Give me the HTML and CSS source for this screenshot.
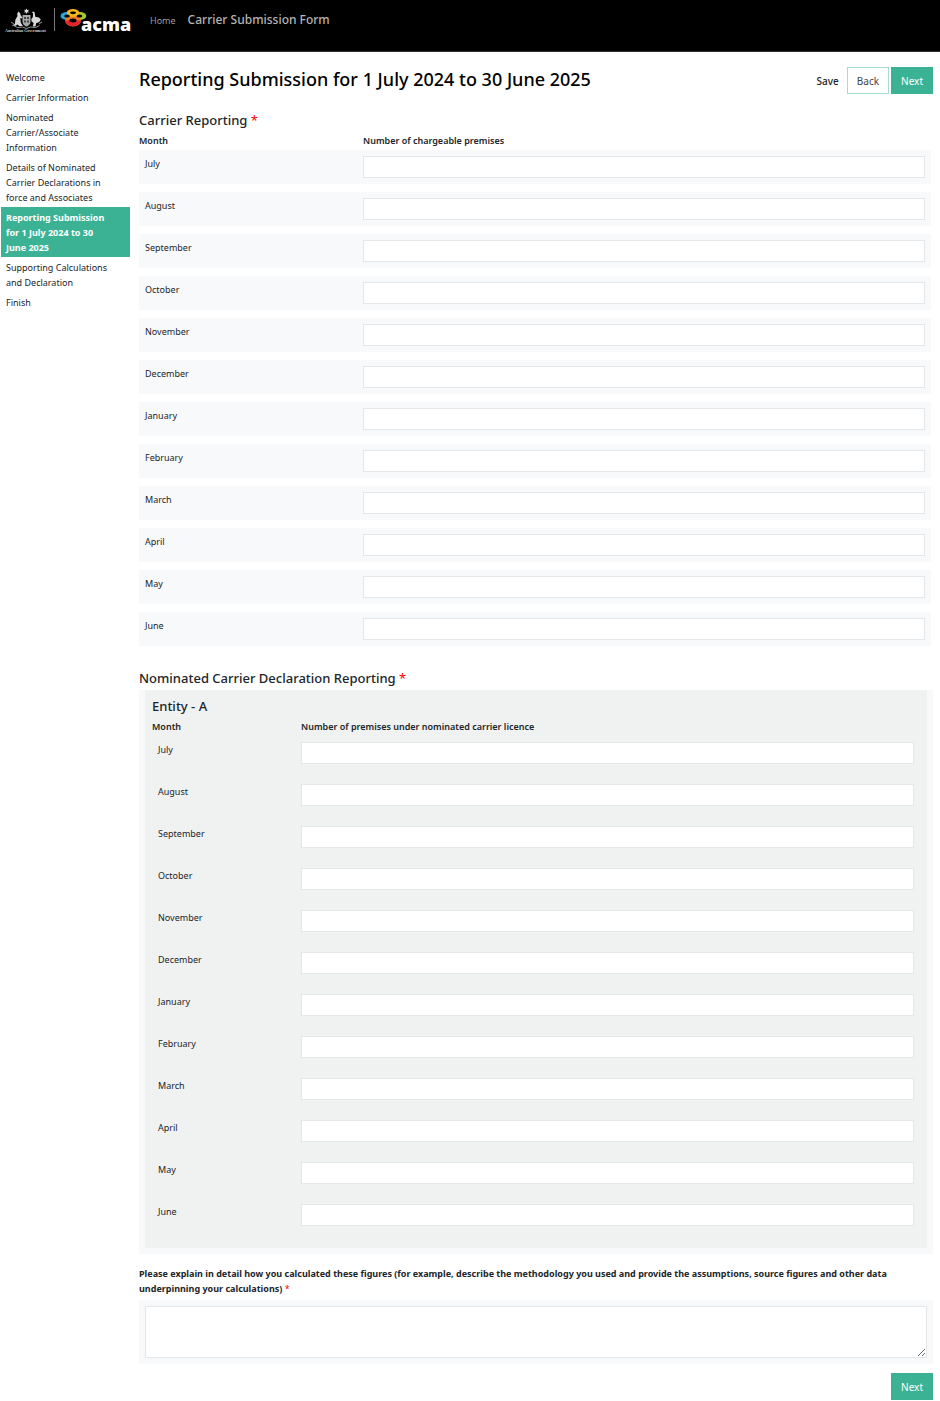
FILE: index.html
```html
<!DOCTYPE html>
<html lang="en">
<head>
  <meta charset="UTF-8" />
  <meta name="viewport" content="width=device-width, initial-scale=1" />
  <title>Carrier Submission Form</title>
  <link rel="stylesheet" href="styles.css">
</head>
<body>
  <header class="topbar">
    <svg class="logo" width="128" height="30" viewBox="0 0 128 30" role="img" aria-label="Australian Government, acma">
      <!-- Coat of arms -->
      <g fill="#d8d8d8">
        <path d="M21.500 .5l.8 1.600 1.700-.3-1 1.400 1 1.400-1.700-.3-.8 1.600-.8-1.600-1.700.3 1-1.400-1-1.400 1.700.3z" />
        <path d="M17.500 7h8v6.500c0 2.500-1.800 4.200-4 5.300-2.200-1.100-4-2.800-4-5.300z" fill="#a9a9a9" />
        <path d="M13.500 3.500l1.500 1.500.8 2.500 1.500 2-.4 1-1.700-.8.6 5 2 3.300h-3.500l-1.800-1.500-2 1.200-4-.2 3.300-1.500.7-4.500 2-3.500-.3-2.500z" />
        <path d="M28.500 3.500l-1.700 1 1.300.7-.3 4-1.500 1.800.3 2.500 2 1.500-.8 3.500h2.700l.6-3.200 3.200-1.300 1.500-2.500-2-2-3.500-.7-.7-4.500z" />
      </g>
      <path d="M19 9h2v2h-2zM22 9h2v2h-2zM19 12.500h2v2h-2zM22 12.500h2v2h-2z" fill="#444" />
      <path d="M8.500 17.500l4 2 5-.5 4 1.500 4-1.500 5 .5 4-2M6 14l3 2M37 14l-3 2" fill="none" stroke="#999" stroke-width="1" />
      <text class="logo-gov" x="0" y="24">Australian Government</text>
      <path d="M49.500 0v23" stroke="#777" stroke-width="1" />
      <!-- Petals, each with a dark centre -->
      <ellipse cx="61.500" cy="8" rx="6" ry="3.900" fill="#2aa5d8" />
      <ellipse cx="75" cy="8" rx="6.300" ry="3.900" fill="#a4c92e" />
      <ellipse cx="68" cy="12.500" rx="7.800" ry="6" fill="#f47b20" />
      <path d="M60.200 12.500c0 3.500 3.500 5.500 7.800 5.500s7.800-2 7.800-5.500z" fill="#e5252b" />
      <ellipse cx="68" cy="5" rx="6.300" ry="4" fill="#f8b81a" />
      <g fill="#000">
        <ellipse cx="62" cy="8" rx="2.800" ry="1.500" />
        <ellipse cx="74.500" cy="8" rx="2.800" ry="1.500" />
        <ellipse cx="68" cy="4.800" rx="3" ry="1.400" />
        <ellipse cx="68" cy="12.500" rx="3.600" ry="1.900" />
      </g>
      <text class="logo-acma" x="76" y="23">acma</text>
    </svg>
    <nav class="topnav">
      <a href="#" class="home">Home</a>
      <a href="#" class="form-name">Carrier Submission Form</a>
    </nav>
  </header>

  <div class="layout">
    <nav class="steps">
      <a href="#">Welcome</a>
      <a href="#">Carrier Information</a>
      <a href="#">Nominated Carrier/Associate Information</a>
      <a href="#">Details of Nominated Carrier Declarations in force and Associates</a>
      <a href="#" class="active">Reporting Submission for 1 July 2024 to 30 June 2025</a>
      <a href="#">Supporting Calculations and Declaration</a>
      <a href="#">Finish</a>
    </nav>

    <main>
      <div class="title-row">
        <h1>Reporting Submission for 1 July 2024 to 30 June 2025</h1>
        <div class="actions">
          <button type="button" class="btn link">Save</button>
          <button type="button" class="btn outline">Back</button>
          <button type="button" class="btn">Next</button>
        </div>
      </div>

      <!-- Carrier Reporting -->
      <section class="carrier">
        <h2>Carrier Reporting <span class="required">*</span></h2>
        <div class="head"><span>Month</span><span>Number of chargeable premises</span></div>
        <div class="rows">
          <div class="row"><label for="c-jul">July</label><input type="text" id="c-jul"></div>
          <div class="row"><label for="c-aug">August</label><input type="text" id="c-aug"></div>
          <div class="row"><label for="c-sep">September</label><input type="text" id="c-sep"></div>
          <div class="row"><label for="c-oct">October</label><input type="text" id="c-oct"></div>
          <div class="row"><label for="c-nov">November</label><input type="text" id="c-nov"></div>
          <div class="row"><label for="c-dec">December</label><input type="text" id="c-dec"></div>
          <div class="row"><label for="c-jan">January</label><input type="text" id="c-jan"></div>
          <div class="row"><label for="c-feb">February</label><input type="text" id="c-feb"></div>
          <div class="row"><label for="c-mar">March</label><input type="text" id="c-mar"></div>
          <div class="row"><label for="c-apr">April</label><input type="text" id="c-apr"></div>
          <div class="row"><label for="c-may">May</label><input type="text" id="c-may"></div>
          <div class="row"><label for="c-jun">June</label><input type="text" id="c-jun"></div>
        </div>
      </section>

      <!-- Nominated Carrier Declaration Reporting -->
      <section class="nominated">
        <h2>Nominated Carrier Declaration Reporting <span class="required">*</span></h2>
        <div class="panel">
          <div class="entity">
            <h3>Entity - A</h3>
            <div class="head"><span>Month</span><span>Number of premises under nominated carrier licence</span></div>
            <div class="rows">
              <div class="row"><label for="n-jul">July</label><input type="text" id="n-jul"></div>
              <div class="row"><label for="n-aug">August</label><input type="text" id="n-aug"></div>
              <div class="row"><label for="n-sep">September</label><input type="text" id="n-sep"></div>
              <div class="row"><label for="n-oct">October</label><input type="text" id="n-oct"></div>
              <div class="row"><label for="n-nov">November</label><input type="text" id="n-nov"></div>
              <div class="row"><label for="n-dec">December</label><input type="text" id="n-dec"></div>
              <div class="row"><label for="n-jan">January</label><input type="text" id="n-jan"></div>
              <div class="row"><label for="n-feb">February</label><input type="text" id="n-feb"></div>
              <div class="row"><label for="n-mar">March</label><input type="text" id="n-mar"></div>
              <div class="row"><label for="n-apr">April</label><input type="text" id="n-apr"></div>
              <div class="row"><label for="n-may">May</label><input type="text" id="n-may"></div>
              <div class="row"><label for="n-jun">June</label><input type="text" id="n-jun"></div>
            </div>
          </div>
        </div>
      </section>

      <section class="explain">
        <label for="method">Please explain in detail how you calculated these figures (for example, describe the methodology you used and provide the assumptions, source figures and other data underpinning your calculations) <span class="required">*</span></label>
        <div class="answer"><textarea id="method"></textarea></div>
      </section>

      <div class="footer-actions">
        <button type="button" class="btn">Next</button>
      </div>
    </main>
  </div>
</body>
</html>
```

FILE: styles.css
```css
* {
  box-sizing: border-box;
}

body {
  margin: 0;
  background-color: #fff;
  color: #212529;
  font-family: 'Noto Sans', 'Open Sans', sans-serif;
  font-size: 9px;
  line-height: 15px;
}

a {
  color: inherit;
  text-decoration: none;
}

h1, h2, h3 {
  margin: 0;
  font-weight: 500;
}

/* Top bar */
.topbar {
  display: flex;
  align-items: flex-start;
  gap: 17px;
  height: 52px;
  padding: 8px 5px;
  background-color: #000;
  border-bottom: 1px solid #333;
}

.logo-gov {
  fill: #ccc;
  font-family: 'Liberation Serif', serif;
  font-size: 4px;
  font-weight: bold;
}

.logo-acma {
  fill: #fff;
  font-family: 'Open Sans', sans-serif;
  font-size: 18px;
  font-weight: 800;
}

.topnav {
  display: flex;
  align-items: baseline;
  gap: 12px;
  line-height: 24px;
  color: #9d9d9d;
}

.form-name {
  font-size: 12px;
  font-weight: 500;
  color: #b5b5b5;
}

/* Page layout */
.layout {
  display: grid;
  grid-template-columns: 129px 1fr;
  gap: 9px;
  padding: 15px 7px 1px 1px;
}

.steps a {
  display: block;
  padding: 3px 15px 2px 5px;
}

.steps .active {
  background-color: #3cb295;
  color: #fff;
  font-weight: bold;
}

/* Title and buttons */
.title-row {
  display: flex;
  justify-content: space-between;
  align-items: flex-start;
  margin-bottom: 14px;
}

h1 {
  font-size: 18px;
  line-height: 24px;
  color: #000;
}

.actions {
  display: flex;
  gap: 2px;
}

.btn {
  height: 27px;
  padding: 0 9px;
  border: 1px solid #3cb295;
  background-color: #3cb295;
  color: #fff;
  font-family: inherit;
  font-size: 10px;
  cursor: pointer;
}

.btn.outline {
  border-color: #a5dccd;
  background-color: #fff;
  color: #444;
}

.btn.link {
  padding: 0 5px;
  border-color: transparent;
  background-color: transparent;
  color: #212529;
  font-weight: 500;
}

/* Month tables */
h2, h3 {
  font-size: 13px;
  line-height: 24px;
}

.required {
  color: #f00;
  font-weight: normal;
}

.head {
  display: grid;
  font-weight: 600;
  line-height: 18px;
}

.rows {
  display: grid;
  gap: 8px;
}

.row {
  display: grid;
  padding: 6px;
}

.row label {
  line-height: 16px;
}

input,
textarea {
  width: 100%;
  border: 1px solid #e3e7ea;
  border-radius: 0;
  background-color: #fff;
  font: inherit;
}

input {
  height: 22px;
  padding: 0 6px;
}

.carrier {
  margin-bottom: 20px;
  padding-right: 2px;
}

.carrier .head {
  grid-template-columns: 224px 1fr;
}

.carrier .row {
  grid-template-columns: 218px 1fr;
  background-color: #f8f9fb;
}

.panel {
  padding: 0 6px 6px;
  background-color: #f8f9fb;
}

.entity {
  padding: 4px 7px 16px;
  background-color: #f0f2f2;
}

.entity .head {
  grid-template-columns: 149px 1fr;
}

.entity .row {
  grid-template-columns: 143px 1fr;
}

/* Explanation */
.explain {
  margin: 12px 0 9px;
}

.explain label {
  display: block;
  font-weight: bold;
}

.answer {
  margin-top: 4px;
  padding: 6px;
  background-color: #f8f9fb;
}

textarea {
  display: block;
  height: 52px;
  resize: vertical;
}

.footer-actions {
  display: flex;
  justify-content: flex-end;
}
```
